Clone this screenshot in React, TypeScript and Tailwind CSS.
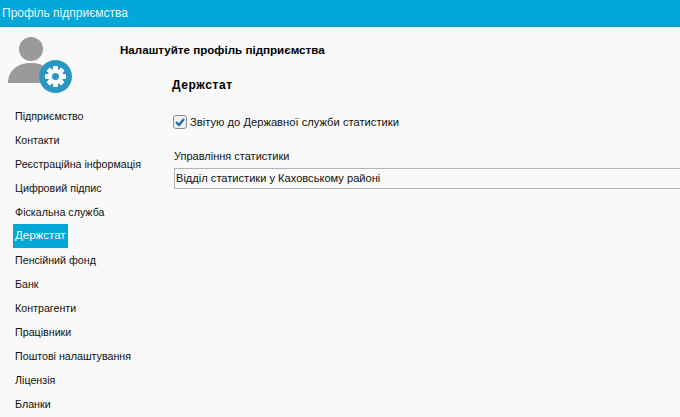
const menuItems = [
  "Підприємство",
  "Контакти",
  "Реєстраційна інформація",
  "Цифровий підпис",
  "Фіскальна служба",
  "Держстат",
  "Пенсійний фонд",
  "Банк",
  "Контрагенти",
  "Працівники",
  "Поштові налаштування",
  "Ліцензія",
  "Бланки",
];

const ProfileIcon = () => (
  <svg width="74" height="60" viewBox="0 0 74 60">
    <circle cx="31" cy="12" r="12" fill="#9a9a9a" />
    <path d="M8 46 C8 33 18 26 31 26 C44 26 54 33 54 46 Z" fill="#9a9a9a" />
    <circle cx="55.5" cy="39.5" r="16.5" fill="#2b96c4" />
    <g fill="#fff">
      <circle cx="55.5" cy="39.5" r="7.5" />
      <rect x="53" y="29" width="5" height="21" rx="1" />
      <rect x="45" y="37" width="21" height="5" rx="1" />
      <rect x="53" y="29" width="5" height="21" rx="1" transform="rotate(45 55.5 39.5)" />
      <rect x="53" y="29" width="5" height="21" rx="1" transform="rotate(-45 55.5 39.5)" />
    </g>
    <circle cx="55.5" cy="39.5" r="3.5" fill="#2b96c4" />
  </svg>
);

export default function App() {
  return (
    <div className="w-[680px] h-[417px] overflow-hidden bg-[#f9f9f9] text-[11px] text-[#111] font-['Liberation_Sans',sans-serif]">
      <div className="h-[27px] flex items-center pl-[2px] bg-[#03a7d8] border-b border-[#0896c0] text-[12px] text-[#e8f7fc]">
        Профіль підприємства
      </div>
      <div className="flex">
        <div className="w-[172px] shrink-0 pl-[13px]">
          <div className="h-[77px] pt-[10px] -ml-[13px]">
            <ProfileIcon />
          </div>
          <div className="flex flex-col items-start text-[10.7px]">
            {menuItems.map((item) => (
              <div
                key={item}
                className={`h-[24px] flex items-center pl-[2px] pr-[1px] ${item === "Держстат" ? "w-[55px] bg-[#03a7d8] text-[11.5px] text-white" : ""}`}
              >
                {item}
              </div>
            ))}
          </div>
        </div>
        <div className="flex-1 min-w-0 flex flex-col">
          <div className="h-[51px] -ml-[52px] pt-[16px] font-bold text-[11.6px] leading-[14px] text-black">Налаштуйте профіль підприємства</div>
          <div className="font-bold text-[12px] tracking-[0.6px] leading-[14px] text-black">Держстат</div>
          <label className="mt-[22px] flex items-center gap-[3px] ml-[1px] h-[16px] text-[11.2px]">
            <span className="w-[14px] h-[14px] flex items-center justify-center rounded-[3px] border border-[#8a8f94] bg-[#f2f2f2]">
              <svg width="12" height="12" viewBox="0 0 12 12">
                <path d="M2 6 L5 9 L10 3" fill="none" stroke="#1b6fa8" strokeWidth="2.4" />
              </svg>
            </span>
            Звітую до Державної служби статистики
          </label>
          <div className="mt-[19px] ml-[2px] leading-[14px]">Управління статистики</div>
          <div className="mt-[5px] ml-[2px] h-[21px] flex items-center pl-[1px] border-y border-l border-[#b5b5b5] text-[11.1px]">
            Відділ статистики у Каховському районі
          </div>
        </div>
      </div>
    </div>
  );
}
